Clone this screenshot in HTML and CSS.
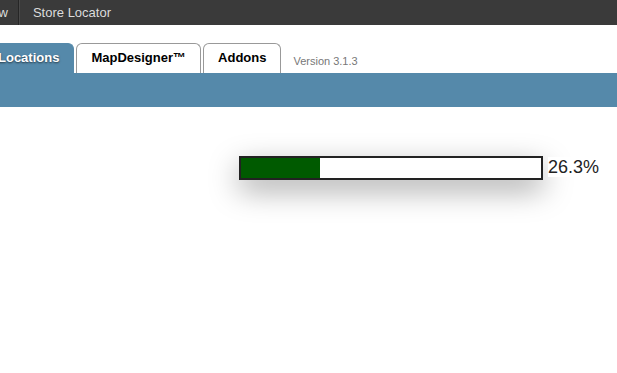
FILE: index.html
```html
<!DOCTYPE html>
<html lang="en">
<head>
  <meta charset="UTF-8">
  <title>Store Locator</title>
  <link rel="stylesheet" href="styles.css">
</head>
<body>

<div class="topbar">
  <div class="topbar-item first">View</div>
  <div class="topbar-item">Store Locator</div>
</div>

<div class="tabs">
  <div class="tab active">Locations</div>
  <div class="tab">MapDesigner™</div>
  <div class="tab">Addons</div>
  <div class="version">Version 3.1.3</div>
</div>
<div class="band"></div>

<div class="content">
  <div class="progress-row">
    <div class="progress">
      <div class="progress-fill" style="width: 26.3%;"></div>
    </div>
    <span class="progress-label">26.3%</span>
  </div>
</div>

</body>
</html>
```

FILE: styles.css
```css
:root {
  --blue: #5589aa;
  --dark: #3a3a3a;
}

* {
  box-sizing: border-box;
}

html, body {
  min-height: 100%;
}

body {
  margin: 0;
  min-height: 373px;
  font-family: 'Liberation Sans', Arial, sans-serif;
  background: #fff;
  color: #222;
}

.topbar {
  display: flex;
  height: 25px;
  background: var(--dark);
  margin-left: -20px;
}

.topbar-item {
  color: #dcdcdc;
  font-size: 13px;
  line-height: 25px;
  padding: 0 13px;
  border-left: 1px solid #4a4a4a;
}

.topbar-item.first {
  border-left: none;
  border-right: 1px solid #262626;
  padding: 0 10px 0 0;
}

.tabs {
  display: flex;
  align-items: flex-end;
  gap: 2px;
  height: 48px;
  margin-left: -17px;
}

.tab {
  height: 30px;
  line-height: 28px;
  padding: 0 14px;
  font-size: 13px;
  font-weight: bold;
  color: #000;
  background: #fff;
  border: 1px solid #999;
  border-bottom: none;
  border-radius: 6px 6px 0 0;
}

.tab.active {
  background: var(--blue);
  border-color: var(--blue);
  color: #fff;
  text-shadow: 0 1px 2px rgba(0, 0, 0, 0.6);
}

.version {
  font-size: 11px;
  color: #777;
  margin-left: 10px;
  line-height: 24px;
}

.band {
  height: 34px;
  background: var(--blue);
}

.content {
  padding: 49px 0 0 239px;
}

.progress-row {
  display: flex;
  align-items: center;
}

.progress {
  width: 304px;
  height: 24px;
  border: 2px solid #222;
  background: #fff;
  box-shadow: 0 10px 30px rgba(0, 0, 0, 0.35);
}

.progress-fill {
  height: 100%;
  background: #005a00;
}

.progress-label {
  margin-left: 5px;
  font-size: 18px;
  color: #222;
  background: #fff;
  line-height: 20px;
  margin-top: -2px;
}
```
